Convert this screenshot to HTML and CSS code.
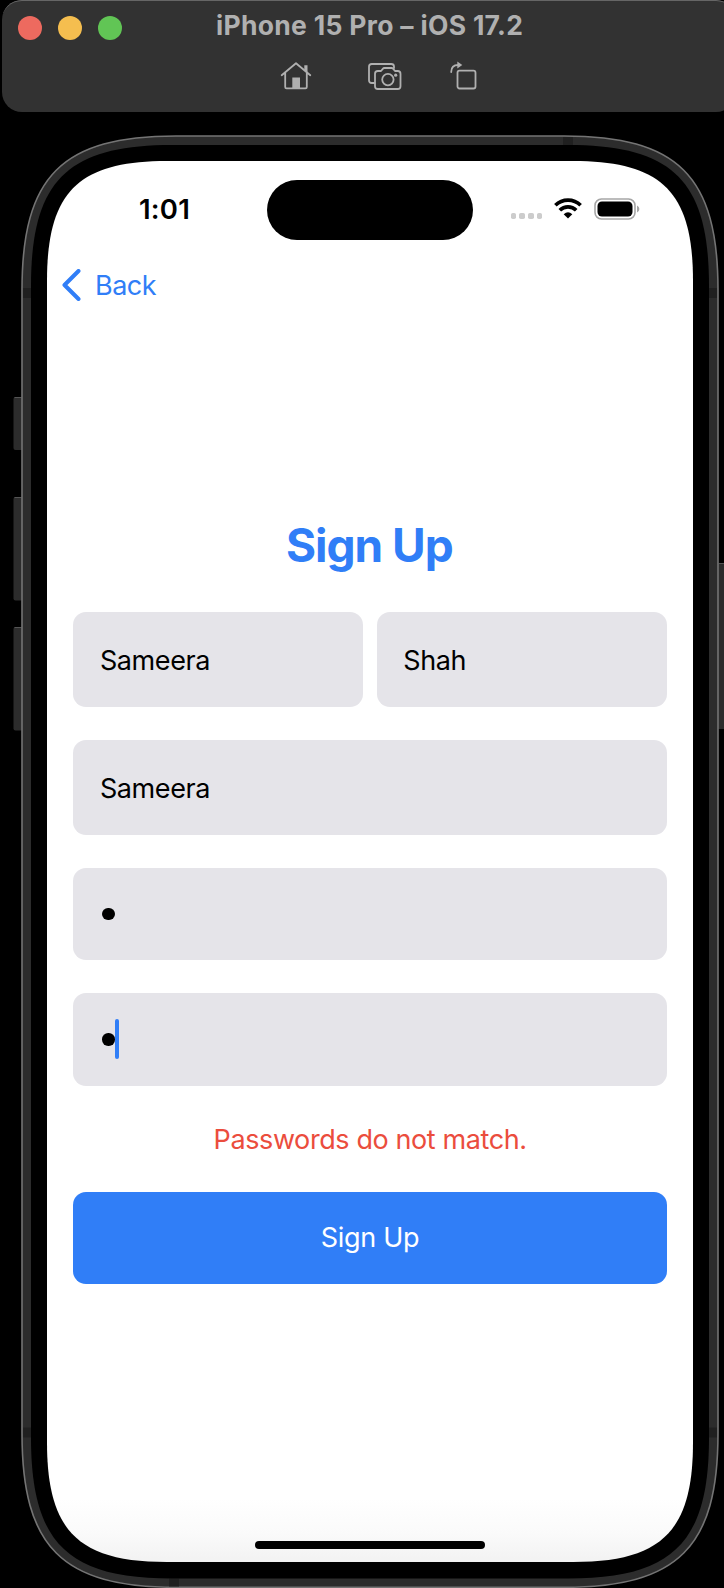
FILE: index.html
```html
<!DOCTYPE html>
<html lang="en">
<head>
<meta charset="utf-8">
<title>iPhone 15 Pro – iOS 17.2</title>
<link rel="stylesheet" href="styles.css">
</head>
<body>
<header class="window-bar">
  <div class="title-row">
    <div class="lights"><span class="light close"></span><span class="light minimize"></span><span class="light zoom"></span></div>
    <h1 class="window-title">iPhone 15 Pro – iOS 17.2</h1>
  </div>
  <div class="tools">
    <svg class="tool-home" width="32" height="30" viewBox="0 0 32 30" fill="none" stroke="#b0b0b0" stroke-width="1.8" stroke-linecap="round" stroke-linejoin="round"><path d="M1.700 14.200 16 2.300 30.300 14.200M5.200 11.500V26q0 1.300 1.300 1.300h19q1.300 0 1.300-1.300V11.500"/><path d="M24.300 4.300h3.200v7.500l-3.200-2.600Z" fill="#b0b0b0" stroke="none"/><path d="M12.300 16.500h7.700v11h-7.700Z" fill="#b0b0b0" stroke="none"/></svg>
    <svg class="tool-camera" width="34" height="30" viewBox="0 0 34 30" fill="none" stroke="#b0b0b0" stroke-width="1.8" stroke-linecap="round" stroke-linejoin="round"><path d="M6.500 22H3.800Q1 22 1 19.200V5.800Q1 3 3.800 3h19.400Q26 3 26 5.500V7"/><path d="M9.800 10h3.200l2-2.400Q15.500 7 16.300 7h7.400q.8 0 1.300.6l2 2.400h2.700Q32.500 10 32.500 12.800v12.400Q32.500 28 29.700 28H9.800Q7 28 7 25.200V12.800Q7 10 9.800 10Z"/><circle cx="19.900" cy="18.600" r="5.700"/><circle cx="27.700" cy="14.200" r="1.600" fill="#b0b0b0" stroke="none"/></svg>
    <svg class="tool-rotate" width="28" height="30" viewBox="0 0 28 30" fill="none" stroke="#b0b0b0" stroke-width="1.8" stroke-linecap="round" stroke-linejoin="round"><rect x="7.500" y="9.700" width="18" height="17.800" rx="2"/><path d="M1.200 11q0-7 7-7"/><path d="m7.300.600 5 3.400-5 3.400Z" fill="#b0b0b0" stroke="none"/></svg>
  </div>
</header>

<main class="device">
  <svg class="frame" width="724" height="1454" viewBox="0 134 724 1454">
    <g class="buttons">
      <rect x="13.500" y="397" width="10" height="53" rx="2"/><rect x="13.500" y="497" width="10" height="103.500" rx="2"/><rect x="13.500" y="627" width="10" height="103.500" rx="2"/><rect x="717" y="563" width="12" height="166" rx="2"/>
      <path class="button-edge" d="M14.500 397.500h7M14.500 497.500h7M14.500 627.500h7M719 563.500h5"/>
    </g>
    <path class="shell" d="M22 290C22 176 62 136 176 136H564C678 136 718 176 718 290V1433.300C718 1547.300 678 1587.300 564 1587.300H176C62 1587.300 22 1547.300 22 1433.300Z"/>
    <path class="seams" d="M563 137h10v8h-10ZM23 288h8v10h-8ZM709 288h8v10h-8ZM23 1427.500h8v10h-8ZM709 1427.500h8v10h-8ZM169 1578.500h10v8h-10Z"/>
    <path class="bezel" d="M31 286C31 181 67 145 172 145H568C673 145 709 181 709 286V1437.500C709 1542.500 673 1578.500 568 1578.500H172C67 1578.500 31 1542.500 31 1437.500Z"/>
  </svg>

  <section class="screen">
    <div class="status">
      <span class="time">1:01</span>
      <span class="island"></span>
      <div class="indicators">
        <span class="signal"><i></i><i></i><i></i><i></i></span>
        <svg class="wifi" width="28" height="21" viewBox="0 0 28 21"><g fill="none" stroke="#000" stroke-width="3.700"><path d="M1.400 7.300a18 18 0 0 1 25.200 0"/><path d="M5.800 12.200a11.700 11.700 0 0 1 16.400 0"/></g><path d="M14 20.500 9.700 16.200Q14 12.500 18.300 16.200Z"/></svg>
        <svg class="battery" width="46" height="22" viewBox="0 0 46 22"><rect x="1" y="1" width="40" height="20" rx="6.500" fill="none" stroke="#a6a6a6" stroke-width="1.600"/><rect x="3.500" y="3.500" width="35" height="15" rx="4.500"/><path d="M43 7.500q2.400 1 2.400 3.500T43 14.500Z" fill="#a6a6a6"/></svg>
      </div>
    </div>
    <a class="back"><svg width="19" height="32" viewBox="0 0 19 32"><path d="M16.500 2 2.500 16l14 14" fill="none" stroke="#307ef7" stroke-width="4" stroke-linecap="round" stroke-linejoin="round"/></svg><span>Back</span></a>

    <form class="signup">
      <h2 class="heading">Sign Up</h2>
      <div class="names"><div class="field">Sameera</div><div class="field">Shah</div></div>
      <div class="field">Sameera</div>
      <div class="field secure"><span class="bullet"></span></div>
      <div class="field secure"><span class="bullet"></span><span class="caret"></span></div>
      <p class="error">Passwords do not match.</p>
      <button class="submit" type="button">Sign Up</button>
    </form>
    <span class="home-indicator"></span>
  </section>
</main>
</body>
</html>
```

FILE: styles.css
```css
* { box-sizing: border-box; }

body {
  margin: 0;
  width: 724px;
  height: 1588px;
  overflow: hidden;
  background: #000;
  font-family: Inter, "Liberation Sans", sans-serif;
  color: #000;
}

/* Simulator window bar */
.window-bar {
  width: 734px;
  height: 112px;
  margin-left: 2px;
  border-radius: 20px;
  background: #323232;
  box-shadow: inset 0 2px 0 -1px #666;
}
.title-row {
  display: flex;
  align-items: center;
  height: 54px;
  padding: 2px 0 0 16px;
}
.lights { display: flex; gap: 16px; }
.light { width: 24px; height: 24px; border-radius: 50%; }
.close { background: #ed6a5f; }
.minimize { background: #f5be4f; }
.zoom { background: #61c555; }
.window-title {
  margin: -6px 0 0 94px;
  font-size: 26.5px;
  line-height: 32px;
  font-weight: 700;
  letter-spacing: 0.3px;
  color: #b0b0b0;
  white-space: nowrap;
}
.tools { display: flex; padding: 7px 0 0 278px; }
.tool-camera { margin-left: 55.5px; }
.tool-rotate { margin-left: 48px; }

/* Device: the frame and the screen share one grid cell */
.device { display: grid; margin-top: 22px; width: 724px; }
.frame, .screen { grid-area: 1 / 1; }
.buttons rect { fill: #2c2c2c; }
.button-edge { stroke: #555; }
.shell { fill: #2c2c2c; stroke: #747474; stroke-width: 1.6; }
.seams { fill: #202020; }
.bezel { fill: #000; }

.screen {
  display: flex;
  flex-direction: column;
  width: 646px;
  height: 1401px;
  margin: 27px 0 0 47px;
  background: linear-gradient(#fff 95.5%, #fafafa 98%, #f2f2f2);
  clip-path: path("M0 120C0 31 31 0 120 0H526C615 0 646 31 646 120V1281C646 1370 615 1401 526 1401H120C31 1401 0 1370 0 1281Z");
}
.status {
  display: grid;
  grid-template-columns: 220px 206px 220px;
  height: 79px;
  padding-top: 18.5px;
}
.time {
  padding: 12px 0 0 92px;
  font-size: 27.5px;
  line-height: 34px;
  font-weight: 600;
  letter-spacing: 0.2px;
}
.island { height: 60px; border-radius: 30px; background: #000; }
.indicators { display: flex; padding: 18px 0 0 37.5px; }
.signal { display: flex; gap: 3px; margin: 15.5px 12px 0 0; }
.signal i { width: 5.7px; height: 5.7px; border-radius: 1.8px; background: #ccc; }
.battery { margin-left: 12px; }

.back {
  display: flex;
  align-items: center;
  gap: 14px;
  height: 34px;
  margin: 28px 0 0 15px;
  font-size: 27px;
  letter-spacing: -0.5px;
  color: #307ef7;
}

.signup {
  display: flex;
  flex-direction: column;
  gap: 33px;
  margin: 0 26.2px 0 26.4px;
  padding-top: 215px;
  font-size: 27px;
}
.heading {
  margin: 0 0 5.7px;
  padding-right: 1.5px;
  font-size: 46px;
  line-height: 56px;
  font-weight: 700;
  letter-spacing: -1px;
  text-align: center;
  color: #307ef7;
}
.names { display: flex; gap: 13.3px; }
.names .field { flex: 1; }
.field {
  display: flex;
  align-items: center;
  height: 95px;
  padding: 2px 26.5px 0;
  border-radius: 13px;
  background: #e5e4e9;
  letter-spacing: -0.4px;
}
.secure { height: 92.5px; padding-top: 0; }
.bullet { width: 12.5px; height: 12.5px; margin-left: 2.2px; border-radius: 50%; background: #000; }
.caret { width: 4px; height: 40px; margin-left: .5px; border-radius: 2px; background: #307ef7; }
.error {
  margin: 0;
  height: 40px;
  line-height: 41px;
  text-align: center;
  color: #eb4d3d;
  letter-spacing: -0.4px;
}
.submit {
  height: 92.5px;
  padding: 0;
  border: 0;
  border-radius: 13px;
  background: #307ef7;
  color: #fff;
  font: inherit;
  letter-spacing: -0.3px;
}
.home-indicator {
  width: 230px;
  height: 8px;
  margin: auto auto 13.5px;
  border-radius: 4px;
  background: #000;
}
```
